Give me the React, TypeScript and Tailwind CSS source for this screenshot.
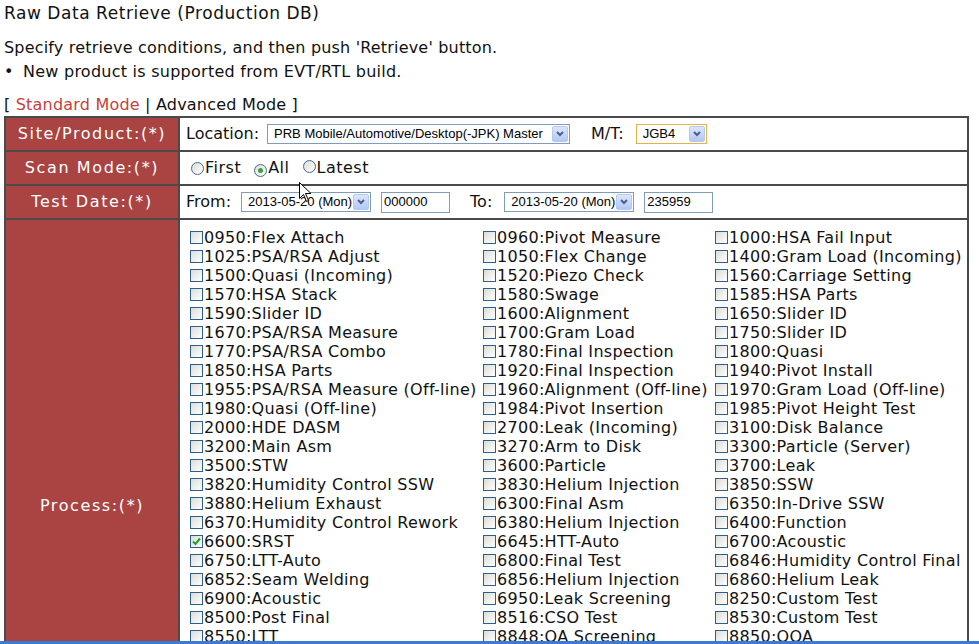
import React from "react";

const col1 = [
  "0950:Flex Attach",
  "1025:PSA/RSA Adjust",
  "1500:Quasi (Incoming)",
  "1570:HSA Stack",
  "1590:Slider ID",
  "1670:PSA/RSA Measure",
  "1770:PSA/RSA Combo",
  "1850:HSA Parts",
  "1955:PSA/RSA Measure (Off-line)",
  "1980:Quasi (Off-line)",
  "2000:HDE DASM",
  "3200:Main Asm",
  "3500:STW",
  "3820:Humidity Control SSW",
  "3880:Helium Exhaust",
  "6370:Humidity Control Rework",
  "6600:SRST",
  "6750:LTT-Auto",
  "6852:Seam Welding",
  "6900:Acoustic",
  "8500:Post Final",
  "8550:LTT",
];
const col2 = [
  "0960:Pivot Measure",
  "1050:Flex Change",
  "1520:Piezo Check",
  "1580:Swage",
  "1600:Alignment",
  "1700:Gram Load",
  "1780:Final Inspection",
  "1920:Final Inspection",
  "1960:Alignment (Off-line)",
  "1984:Pivot Insertion",
  "2700:Leak (Incoming)",
  "3270:Arm to Disk",
  "3600:Particle",
  "3830:Helium Injection",
  "6300:Final Asm",
  "6380:Helium Injection",
  "6645:HTT-Auto",
  "6800:Final Test",
  "6856:Helium Injection",
  "6950:Leak Screening",
  "8516:CSO Test",
  "8848:OA Screening",
];
const col3 = [
  "1000:HSA Fail Input",
  "1400:Gram Load (Incoming)",
  "1560:Carriage Setting",
  "1585:HSA Parts",
  "1650:Slider ID",
  "1750:Slider ID",
  "1800:Quasi",
  "1940:Pivot Install",
  "1970:Gram Load (Off-line)",
  "1985:Pivot Height Test",
  "3100:Disk Balance",
  "3300:Particle (Server)",
  "3700:Leak",
  "3850:SSW",
  "6350:In-Drive SSW",
  "6400:Function",
  "6700:Acoustic",
  "6846:Humidity Control Final",
  "6860:Helium Leak",
  "8250:Custom Test",
  "8530:Custom Test",
  "8850:OOA",
];

function Check({ checked }: { checked?: boolean }) {
  return (
    <span className="relative inline-block w-[13px] h-[13px] border border-[#2d5f8a] bg-gradient-to-br from-[#dcdcd7] to-white shrink-0">
      {checked && (
        <svg className="absolute left-[1px] top-[1px]" width="9" height="9" viewBox="0 0 9 9">
          <path d="M1 4.5 L3.5 7 L8 1.5" stroke="#21a121" strokeWidth="2" fill="none" />
        </svg>
      )}
    </span>
  );
}

function Radio({ checked }: { checked?: boolean }) {
  return (
    <span className="relative inline-flex items-center justify-center w-[13px] h-[13px] rounded-full border border-[#4a6a8f] bg-gradient-to-br from-[#dcdcd7] to-white shrink-0">
      {checked && <span className="w-[5px] h-[5px] rounded-full bg-[#3aa23a]" />}
    </span>
  );
}

function Arrow() {
  return (
    <span className="flex items-center justify-center w-[16px] h-[16px] rounded-[2px] border border-[#b6c9f2] bg-gradient-to-b from-[#dbe6fd] to-[#b3c8f6] shrink-0">
      <svg width="8" height="6" viewBox="0 0 8 6">
        <path d="M1 1 L4 4 L7 1" stroke="#4d6185" strokeWidth="2" fill="none" />
      </svg>
    </span>
  );
}

function Sel({ text, className }: { text: string; className: string }) {
  return (
    <div
      className={
        "flex items-center justify-between h-[20px] bg-white pl-[6px] pr-[1px] font-['Liberation_Sans',Arial,sans-serif] text-[13px] tracking-normal text-black " +
        className
      }
    >
      <span className="whitespace-nowrap overflow-hidden">{text}</span>
      <Arrow />
    </div>
  );
}

function Inp({ text }: { text: string }) {
  return (
    <div className="flex items-center h-[21px] w-[69px] border border-[#7f9db9] bg-white pl-[2px] font-['Liberation_Sans',Arial,sans-serif] text-[13px] text-black">
      {text}
    </div>
  );
}

function Item({ t }: { t: string }) {
  return (
    <div className="flex items-center h-[19px] whitespace-nowrap">
      <Check checked={t === "6600:SRST"} />
      <span className="ml-[1px] tracking-[0.3px]">{t}</span>
    </div>
  );
}

function Label({ children }: { children: React.ReactNode }) {
  return (
    <div className="w-[174px] shrink-0 bg-[#a94442] text-white flex items-center justify-center text-[16px] tracking-[1.6px] border-r-2 border-[#4a4a4a]">
      {children}
    </div>
  );
}

export default function App() {
  return (
    <div className="relative w-[979px] h-[644px] overflow-hidden bg-white text-[#111] font-['DejaVu_Sans',Verdana,sans-serif]">
      <div className="pl-[4px]">
        <div className="h-[28px] flex items-center text-[17px] tracking-[0.55px]">Raw Data Retrieve (Production DB)</div>
        <div className="mt-[8px] h-[24px] flex items-center text-[16px] tracking-[0.18px]">
          Specify retrieve conditions, and then push 'Retrieve' button.
        </div>
        <div className="h-[24px] flex items-center text-[16px] tracking-[0.25px]">
          <span className="w-[19px]">•</span>New product is supported from EVT/RTL build.
        </div>
        <div className="mt-[10px] h-[22px] flex items-center text-[16px] tracking-[0.2px]">
          [&nbsp;<span className="text-[#c8403b]">Standard Mode</span>&nbsp;|&nbsp;Advanced Mode&nbsp;]
        </div>
      </div>

      <div className="ml-[4px] w-[965px] border-2 border-[#4a4a4a] flex flex-col">
        <div className="flex h-[34px] border-b-2 border-[#4a4a4a]">
          <Label>Site/Product:(*)</Label>
          <div className="flex-1 flex items-center pl-[6px] text-[16px]">
            <span>Location:</span>
            <Sel text="PRB Mobile/Automotive/Desktop(-JPK) Master" className="ml-[8px] w-[303px] border border-[#7f9db9]" />
            <span className="ml-[21px]">M/T:</span>
            <Sel text="JGB4" className="ml-[12px] w-[71px] border border-[#e3b24a]" />
          </div>
        </div>

        <div className="flex h-[34px] border-b-2 border-[#4a4a4a]">
          <Label>Scan Mode:(*)</Label>
          <div className="flex-1 flex items-center pl-[11px] text-[16px] tracking-[0.5px]">
            <Radio />
            <span className="ml-[1px]">First</span>
            <span className="ml-[13px]">
              <Radio checked />
            </span>
            <span className="ml-[1px]">All</span>
            <span className="ml-[13px]">
              <Radio />
            </span>
            <span className="ml-[1px]">Latest</span>
          </div>
        </div>

        <div className="flex h-[34px] border-b-2 border-[#4a4a4a]">
          <Label>Test Date:(*)</Label>
          <div className="flex-1 flex items-center pl-[6px] text-[16px]">
            <span>From:</span>
            <Sel text="2013-05-20 (Mon)" className="ml-[10px] w-[130px] border border-[#7f9db9]" />
            <span className="ml-[10px]">
              <Inp text="000000" />
            </span>
            <span className="ml-[20px]">To:</span>
            <Sel text="2013-05-20 (Mon)" className="ml-[12px] w-[130px] border border-[#7f9db9]" />
            <span className="ml-[10px]">
              <Inp text="235959" />
            </span>
          </div>
        </div>

        <div className="flex h-[572px]">
          <Label>Process:(*)</Label>
          <div className="flex-1 pt-[8px] pl-[10px] text-[16px] grid grid-cols-[293px_232px_1fr] content-start">
            <div>
              {col1.map((t) => (
                <Item key={t} t={t} />
              ))}
            </div>
            <div>
              {col2.map((t) => (
                <Item key={t} t={t} />
              ))}
            </div>
            <div>
              {col3.map((t, i) => (
                <Item key={t + i} t={t} />
              ))}
            </div>
          </div>
        </div>
      </div>

      <svg className="absolute left-[299px] top-[182px]" width="13" height="21" viewBox="0 0 13 21">
        <path d="M0.5 0.5 L0.5 16.5 L4.5 12.5 L7.5 19.5 L9.5 18.5 L6.5 11.5 L12 11.5 Z" fill="white" stroke="black" strokeWidth="1" />
      </svg>

      <div className="absolute left-0 bottom-0 w-full h-[3px] bg-[#3b7bd6]" />
    </div>
  );
}
